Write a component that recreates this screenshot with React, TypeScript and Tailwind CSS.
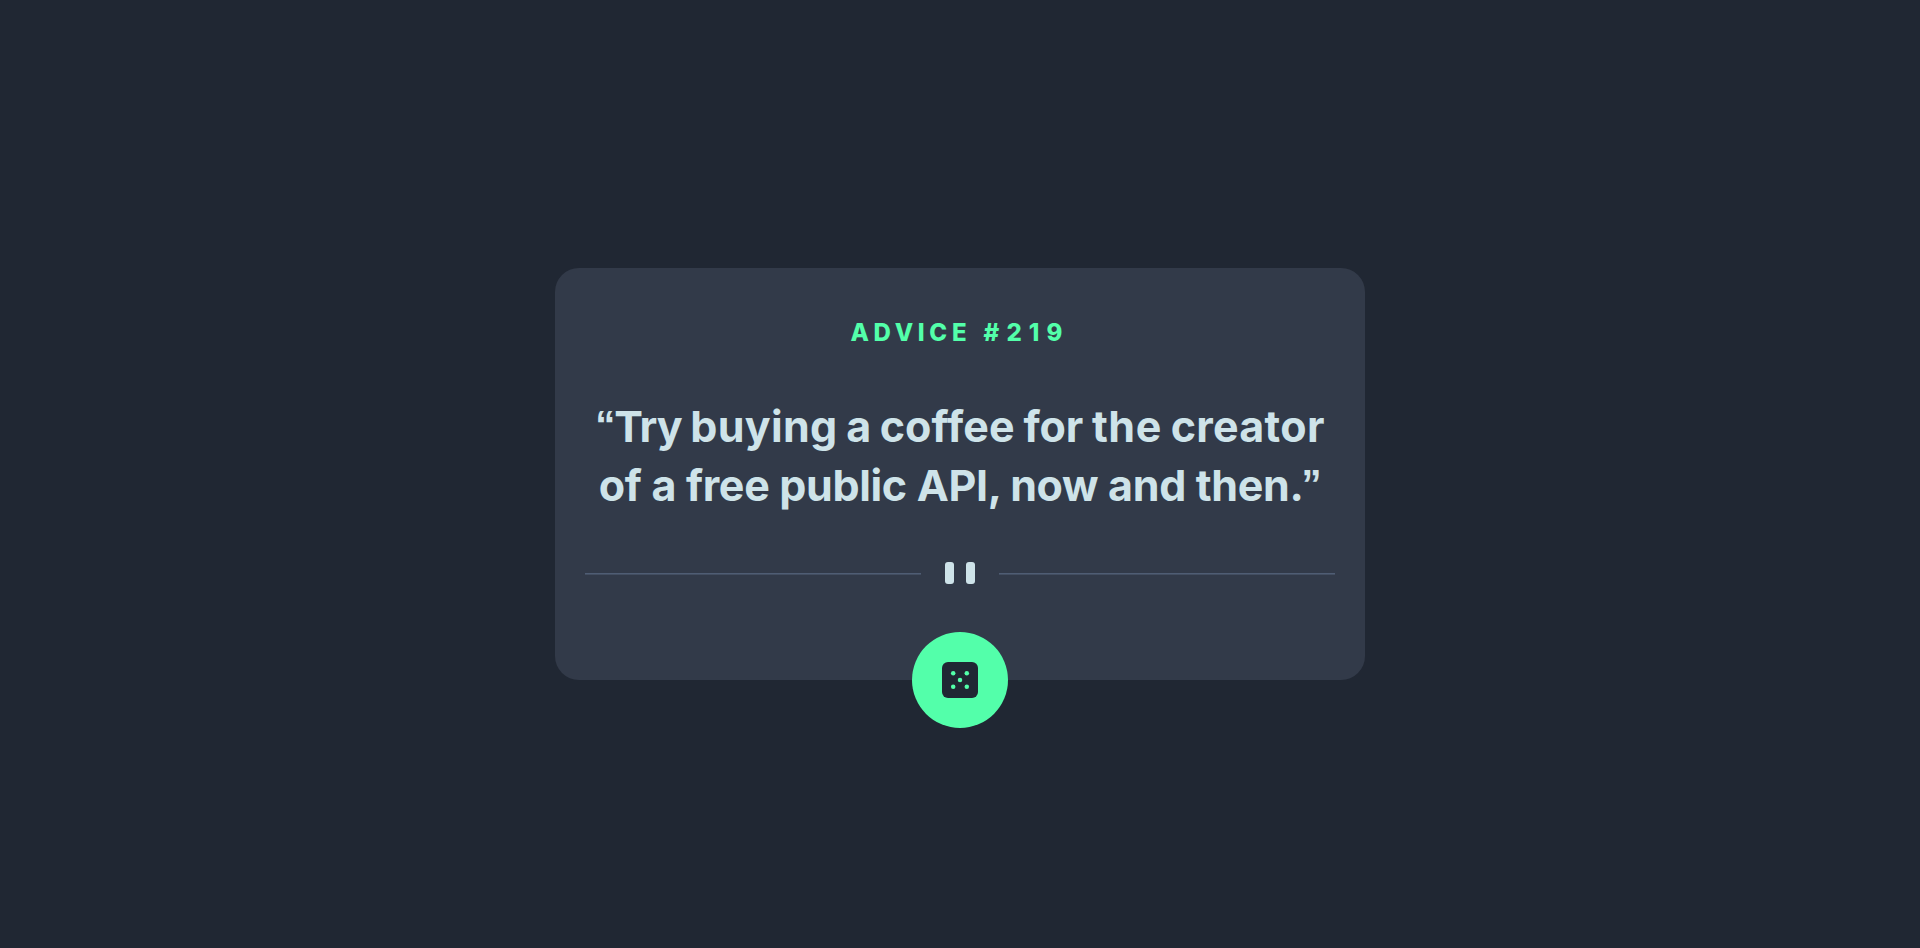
function Divider() {
  return (
    <svg className="block h-[22px] w-[750px] shrink-0" viewBox="0 0 750 22" aria-hidden="true">
      <path d="M0 11h336v1H0zM414 11h336v1H414z" fill="#4f5d74" />
      <path d="M0 12h336v1H0zM414 12h336v1H414z" fill="#434e61" />
      <rect x="360" y="0" width="9" height="22" rx="3" fill="#cee3e9" />
      <rect x="381" y="0" width="9" height="22" rx="3" fill="#cee3e9" />
    </svg>
  );
}

function DiceIcon() {
  return (
    <svg className="size-9" viewBox="0 0 36 36" aria-hidden="true">
      <rect width="36" height="36" rx="6" fill="#202733" />
      <g fill="#53ffaa">
        <circle cx="11.2" cy="11.2" r="2.25" />
        <circle cx="24.8" cy="11.2" r="2.25" />
        <circle cx="18" cy="18" r="2.25" />
        <circle cx="11.2" cy="24.8" r="2.25" />
        <circle cx="24.8" cy="24.8" r="2.25" />
      </g>
    </svg>
  );
}

export default function App() {
  return (
    <main className="flex min-h-screen items-center justify-center bg-[#202733] font-['Inter',sans-serif]">
      <section className="relative flex h-[412px] w-[810px] flex-col items-center rounded-3xl bg-[#323a49]">
        <h1 className="mt-[49px] text-[24px] leading-8 font-extrabold whitespace-nowrap text-[#53ffaa]">
          <span className="tracking-[4.7px]">ADVICE</span>
          <span className="tracking-[7.1px]"> #219</span>
        </h1>
        <p className="mt-[48px] flex flex-col items-center text-[43px] leading-[59px] font-bold whitespace-nowrap text-[#cee3e9]">
          <span className="block h-[59px] tracking-[-0.1px] [word-spacing:-1.4px]">
            <span className="align-[3px] font-['Liberation_Sans',sans-serif] text-[40px] leading-none tracking-[-1px]">“</span>
            <span className="tracking-[-1px]">Try</span> <span className="tracking-[0.3px]">buying</span> a{' '}
            <span className="tracking-[0.1px]">coffee</span> for <span className="tracking-[0.6px]">the</span>{' '}
            <span className="tracking-[0.3px]">creator</span>
          </span>
          <span className="block h-[59px] tracking-[-0.34px]">
            of a free public API, now and then.
            <span className="-ml-[2px] align-[3px] font-['Liberation_Sans',sans-serif] text-[40px] leading-none">”</span>
          </span>
        </p>
        <div className="mt-[47px]">
          <Divider />
        </div>
        <button
          type="button"
          aria-label="New advice"
          className="absolute -bottom-12 left-1/2 flex size-24 -translate-x-1/2 items-center justify-center rounded-full bg-[#53ffaa]"
        >
          <DiceIcon />
        </button>
      </section>
    </main>
  );
}
